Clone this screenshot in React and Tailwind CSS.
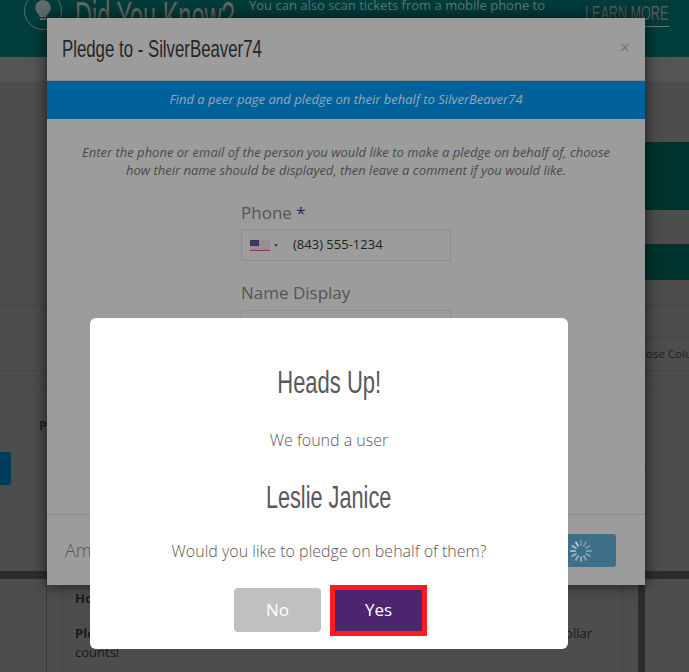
import React from 'react';

const headFont = "font-['Liberation_Sans',sans-serif]";
const bodyFont = "font-['Open_Sans',sans-serif]";

const Spinner = () => (
  <svg width="24" height="24" viewBox="0 0 24 24" stroke="#b9c9d1" strokeWidth="2" strokeLinecap="round">
    {Array.from({ length: 12 }).map((_, i) => (
      <line key={i} x1="12" y1="2" x2="12" y2="6" opacity={0.35 + (i / 12) * 0.65} transform={`rotate(${i * 30} 12 12)`} />
    ))}
  </svg>
);

const Flag = () => (
  <svg width="20" height="11" viewBox="0 0 20 11">
    <rect width="20" height="11" fill="#a9898d" />
    <rect y="2" width="20" height="1" fill="#8f8f98" />
    <rect y="4" width="20" height="1" fill="#8f8f98" />
    <rect y="6" width="20" height="1" fill="#8f8f98" />
    <rect y="8" width="20" height="1" fill="#8f8f98" />
    <rect y="10" width="20" height="1" fill="#8a3a42" />
    <rect width="9" height="6" fill="#333a66" />
  </svg>
);

// page underneath, already dimmed by the backdrop
const Page = () => (
  <div className={`flex flex-col h-full ${bodyFont}`}>
    <div className="h-[57px] shrink-0 bg-[#003d3b] flex items-start overflow-hidden">
      <div className="ml-[24px] -mt-[8px] w-[38px] h-[38px] rounded-full border-[1.5px] border-[#5c6f6d] flex items-center justify-center shrink-0">
        <svg width="18" height="24" viewBox="0 0 18 24" fill="#5f6d6b">
          <path d="M9 1a8 8 0 0 0-5 14c1 1 1.5 2 1.5 3h7c0-1 .5-2 1.5-3A8 8 0 0 0 9 1z" />
          <rect x="6" y="19" width="6" height="2" />
        </svg>
      </div>
      <div className={`ml-[13px] w-[174px] -mt-[8px] text-[42px] leading-[50px] text-[#666] whitespace-nowrap shrink-0 ${headFont}`}>
        <span className="inline-block origin-left scale-x-[0.56]">Did You Know?</span>
      </div>
      <div className="w-[336px] shrink-0 -mt-[5px] text-[13px] leading-[20px] text-[#5f7a77] whitespace-nowrap">You can also scan tickets from a mobile phone to</div>
      <div className={`w-[84px] mt-[1px] pb-[1px] border-b border-[#6a7a78] text-[21px] leading-[24px] text-[#5a5a5a] whitespace-nowrap shrink-0 ${headFont}`}>
        <span className="inline-block origin-left scale-x-[0.6]">LEARN MORE</span>
      </div>
    </div>
    <div className="h-[25px] shrink-0 bg-[#555] border-b border-[#505050]" />
    <div className="h-[60px] shrink-0" />
    <div className="h-[68px] shrink-0 bg-[#00332d] ml-[645px]" />
    <div className="h-[34px] shrink-0" />
    <div className="h-[36px] shrink-0 bg-[#00332d] ml-[645px]" />
    <div className="h-[26px] shrink-0 border-b border-[#454545]" />
    <div className="h-[32px] shrink-0 ml-[645px] border-b border-[#454545]" />
    <div className="h-[33px] shrink-0 border-b border-[#454545] pl-[646px] pt-[6px] text-[11.5px] leading-[20px] text-[#1f1f1f] whitespace-nowrap overflow-hidden">ose Columns</div>
    <div className="h-[16px] shrink-0 border-b border-[#474747]" />
    <div className="h-[184px] shrink-0">
      <div className="mt-[30px] ml-[39px] text-[12.5px] leading-[18px] font-bold text-[#1f1f1f]">P</div>
      <div className="mt-[17px] flex items-center">
        <div className="w-[11px] h-[33px] rounded-r-[3px] bg-[#003a5c]" />
        <span className="ml-[628px] text-[13px] leading-[18px] text-[#003a5c]">4</span>
      </div>
    </div>
    <div className="h-[8px] shrink-0 bg-[#2d2d2d]" />
    <div className="flex-1 ml-[46px] w-[599px] border-l border-l-[#3a3a3a] border-r-[7px] border-r-[#2d2d2d]">
      <div className="ml-[15px] w-[561px] h-full border-x border-[#454545] pl-[12px] pr-[30px] pt-[10px] text-[13px] leading-[19px] text-[#1a1a1a]">
        <p className="font-bold">How</p>
        <p className="mt-[16px] flex justify-between"><b>Pledge</b><span>dollar</span></p>
        <p>counts!</p>
      </div>
    </div>
  </div>
);

const PledgeModal = () => (
  <div className={`absolute left-[47px] top-[18px] w-[598px] h-[567px] bg-[#9c9c9c] shadow-[0_0_14px_rgba(0,0,0,0.7)] flex flex-col ${bodyFont}`}>
    <div className="h-[63px] shrink-0 border-b border-[#8a8a8a] flex items-center justify-between pl-[15px] pr-[15px]">
      <h2 className={`text-[24px] leading-[30px] text-[#262626] whitespace-nowrap ${headFont}`}>
        <span className="inline-block origin-left scale-x-[0.7]">Pledge to - SilverBeaver74</span>
      </h2>
      <span className="text-[18px] leading-[18px] text-[#777] -mt-[4px]">×</span>
    </div>
    <div className="h-[38px] shrink-0 bg-[#00619b] flex items-center justify-center text-[13px] italic text-[#97a8b3]">
      Find a peer page and pledge on their behalf to SilverBeaver74
    </div>
    <div className="flex-1 flex flex-col items-center pt-[24px]">
      <p className="text-[13px] leading-[18px] italic text-[#4a4a4a] text-center w-[532px]">
        Enter the phone or email of the person you would like to make a pledge on behalf of, choose how their name should be displayed, then leave a comment if you would like.
      </p>
      <div className="w-[210px] mt-[22px]">
        <div className="text-[17px] leading-[24px] text-[#555]">Phone <span className="text-[#3a1a5a]">*</span></div>
        <div className="mt-[4px] h-[32px] border border-[#8c8c8c] rounded-[2px] flex items-center pl-[8px]">
          <Flag />
          <span className="ml-[4px] w-0 h-0 border-x-[2.5px] border-x-transparent border-t-[3px] border-t-[#444]" />
          <span className="ml-[15px] text-[13px] text-[#222]">(843) 555-1234</span>
        </div>
        <div className="mt-[20px] text-[17px] leading-[24px] text-[#555]">Name Display</div>
        <div className="mt-[5px] h-[32px] border border-[#8c8c8c] rounded-[2px]" />
      </div>
    </div>
    <div className="h-[71px] shrink-0 border-t border-[#8a8a8a] flex items-center justify-between pl-[18px] pr-[29px]">
      <span className="text-[18px] font-light text-[#555]">Amount</span>
      <div className="w-[70px] h-[33px] rounded-[3px] bg-[#3d7088] flex items-center justify-center mt-[1px]">
        <Spinner />
      </div>
    </div>
  </div>
);

const HeadsUp = () => (
  <div className={`absolute left-[90px] top-[318px] w-[478px] h-[331px] bg-white rounded-[6px] flex flex-col items-center ${bodyFont}`}>
    <h2 className={`mt-[46px] text-[31px] leading-[38px] text-[#595959] whitespace-nowrap ${headFont}`}>
      <span className="inline-block scale-x-[0.71]">Heads Up!</span>
    </h2>
    <p className="mt-[27px] text-[16px] leading-[22px] font-light text-[#595959]">We found a user</p>
    <h2 className={`mt-[28px] text-[31px] leading-[38px] text-[#595959] whitespace-nowrap ${headFont}`}>
      <span className="inline-block scale-x-[0.7]">Leslie Janice</span>
    </h2>
    <p className="mt-[23px] text-[16px] leading-[22px] font-light text-[#595959]">Would you like to pledge on behalf of them?</p>
    <div className="mt-[23px] ml-[3px] flex items-start gap-[9px]">
      <button className="mt-[3px] w-[87px] h-[44px] pb-[1px] rounded-[4px] bg-[#c0c0c0] text-white text-[17px] font-medium">No</button>
      <button className="w-[97px] h-[51px] pb-[2px] border-[5px] border-[#ff1a1f] bg-[#4d2470] text-white text-[17px] font-medium">Yes</button>
    </div>
  </div>
);

export default function App() {
  return (
    <div className="relative w-[689px] h-[672px] overflow-hidden bg-[#4d4d4d]">
      <Page />
      <PledgeModal />
      <HeadsUp />
    </div>
  );
}
